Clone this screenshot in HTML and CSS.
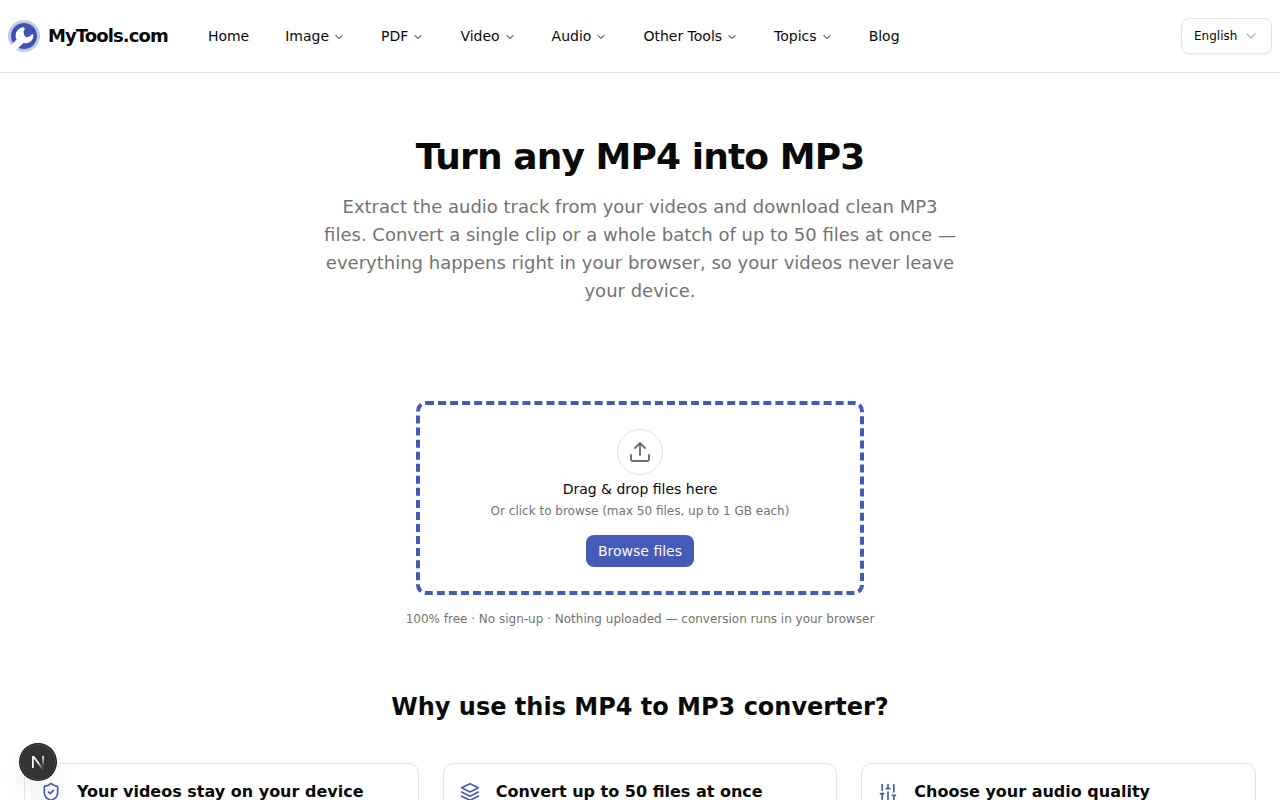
FILE: index.html
```html
<!DOCTYPE html>
<html lang="en">

<head>
    <meta charset="utf-8" />
    <title>MP4 to MP3 - MyTools.com</title>
    <meta name="viewport" content="width=device-width, initial-scale=1">
    <link rel="stylesheet" href="styles.css">
</head>

<body>
    <svg class="sprite" aria-hidden="true">
        <symbol id="chevron" viewBox="0 0 24 24">
            <path d="m6 9 6 6 6-6" />
        </symbol>
    </svg>

    <header class="header">
        <a class="brand" href="#">
            <svg class="logo" viewBox="0 0 32 32" aria-hidden="true">
                <circle cx="16" cy="16" r="16" fill="#c5cae0" />
                <circle cx="16" cy="16" r="13" fill="#3f51b5" />
                <path fill="#fff" d="M0 28 8.500 19.500C7 16 7.500 12.500 9.500 10.500 11 8.500 13 7 16 7.200L16.800 9 15.500 11.500 16.500 16 18.500 17.200 22 16.300 24 14 25.300 15C25.500 18.500 24 21 21.500 22.300 19.500 23.500 17.500 23.500 15.500 23L6 32H0Z" />
            </svg>
            <span class="brand-name">MyTools.com</span>
        </a>
        <nav class="nav">
            <a href="#">Home</a>
            <button type="button">Image <svg class="chevron"><use href="#chevron" /></svg></button>
            <button type="button">PDF <svg class="chevron"><use href="#chevron" /></svg></button>
            <button type="button">Video <svg class="chevron"><use href="#chevron" /></svg></button>
            <button type="button">Audio <svg class="chevron"><use href="#chevron" /></svg></button>
            <button type="button">Other Tools <svg class="chevron"><use href="#chevron" /></svg></button>
            <button type="button">Topics <svg class="chevron"><use href="#chevron" /></svg></button>
            <a href="#">Blog</a>
        </nav>
        <div class="language">
            <select aria-label="Language">
                <option>English</option>
            </select>
            <svg class="chevron"><use href="#chevron" /></svg>
        </div>
    </header>

    <main>
        <section class="hero">
            <h1>Turn any MP4 into MP3</h1>
            <p>Extract the audio track from your videos and download clean MP3 files. Convert a single clip or a whole batch of up to 50 files at once — everything happens right in your browser, so your videos never leave your device.</p>
        </section>

        <section class="converter">
            <div class="dropzone">
                <div class="upload-icon">
                    <svg class="icon" viewBox="0 0 24 24" aria-hidden="true">
                        <path d="M12 3v12M17 8l-5-5-5 5M21 15v4a2 2 0 0 1-2 2H5a2 2 0 0 1-2-2v-4" />
                    </svg>
                </div>
                <p class="drop-title">Drag &amp; drop files here</p>
                <p class="drop-hint">Or click to browse (max 50 files, up to 1 GB each)</p>
                <button type="button" class="btn-primary">Browse files</button>
            </div>
            <p class="note">100% free · No sign-up · Nothing uploaded — conversion runs in your browser</p>
        </section>

        <section class="features">
            <h2>Why use this MP4 to MP3 converter?</h2>
            <div class="cards">
                <article class="card">
                    <svg class="icon" viewBox="0 0 24 24" aria-hidden="true">
                        <path d="M20 13c0 5-3.500 7.500-7.660 8.950a1 1 0 0 1-.67-.01C7.500 20.500 4 18 4 13V6a1 1 0 0 1 1-1c2 0 4.500-1.200 6.240-2.720a1.170 1.170 0 0 1 1.520 0C14.510 3.810 17 5 19 5a1 1 0 0 1 1 1z" />
                        <path d="m9 12 2 2 4-4" />
                    </svg>
                    <h3>Your videos stay on your device</h3>
                </article>
                <article class="card">
                    <svg class="icon" viewBox="0 0 24 24" aria-hidden="true">
                        <path d="M12 2 2 7l10 5 10-5z" />
                        <path d="m2 12 10 5 10-5" />
                        <path d="m2 17 10 5 10-5" />
                    </svg>
                    <h3>Convert up to 50 files at once</h3>
                </article>
                <article class="card">
                    <svg class="icon" viewBox="0 0 24 24" aria-hidden="true">
                        <path d="M5 21v-7M5 10V3M12 21v-9M12 8V3M19 21v-5M19 12V3M3 14h4M10 8h4M17 16h4" />
                    </svg>
                    <h3>Choose your audio quality</h3>
                </article>
            </div>
        </section>
    </main>

    <button type="button" class="dev-badge" aria-label="Open developer tools">
        <svg viewBox="0 0 40 40" aria-hidden="true">
            <defs>
                <linearGradient id="fade-diagonal" x1="20" y1="19" x2="27" y2="29" gradientUnits="userSpaceOnUse">
                    <stop stop-color="#fff" />
                    <stop offset="1" stop-color="#fff" stop-opacity="0" />
                </linearGradient>
                <linearGradient id="fade-stem" x1="26" y1="13" x2="26" y2="26" gradientUnits="userSpaceOnUse">
                    <stop stop-color="#fff" />
                    <stop offset="1" stop-color="#fff" stop-opacity="0" />
                </linearGradient>
            </defs>
            <path d="M14 27V14h1l6 8" stroke="#fff" />
            <path d="m21 22 5 7" stroke="url(#fade-diagonal)" />
            <path d="M25 13h2v13h-2z" fill="url(#fade-stem)" />
        </svg>
    </button>
</body>

</html>
```
FILE: styles.css
```css
* {
    box-sizing: border-box;
}

body {
    margin: 0;
    font-family: "DejaVu Sans", sans-serif;
    font-size: 14px;
    line-height: 20px;
    color: #0a0a0a;
    background-color: #fff;
}

h1,
h2,
h3,
p {
    margin: 0;
}

a {
    color: inherit;
    text-decoration: none;
}

button,
select {
    font: inherit;
    color: inherit;
    cursor: pointer;
}

.sprite {
    display: none;
}

.icon,
.chevron {
    flex-shrink: 0;
    fill: none;
    stroke: currentColor;
    stroke-width: 2;
    stroke-linecap: round;
    stroke-linejoin: round;
}

.header {
    display: flex;
    align-items: center;
    gap: 40px;
    padding: 18px 8px;
    border-bottom: 1px solid #e5e5e5;
}

.brand {
    display: flex;
    align-items: center;
    gap: 8px;
}

.logo {
    width: 32px;
    height: 32px;
}

.brand-name {
    font-size: 18px;
    font-weight: bold;
    line-height: 28px;
    letter-spacing: -0.05em;
}

.nav {
    display: flex;
    align-items: center;
    gap: 36px;
}

.nav button {
    display: flex;
    align-items: center;
    gap: 4px;
    padding: 0;
    border: 0;
    background: none;
}

.nav .chevron {
    width: 12px;
    height: 12px;
    margin-top: 2px;
}

.language {
    display: grid;
    align-items: center;
    margin-left: auto;
}

.language select,
.language .chevron {
    grid-area: 1 / 1;
}

.language select {
    height: 36px;
    padding: 0 33px 0 12px;
    border: 1px solid #e5e5e5;
    border-radius: 8px;
    background-color: #fff;
    box-shadow: 0 1px 2px rgba(0, 0, 0, 0.05);
    font-size: 12px;
    appearance: none;
}

.language .chevron {
    justify-self: end;
    width: 16px;
    height: 16px;
    margin-right: 13px;
    color: #b5b5b5;
    pointer-events: none;
}

.hero {
    max-width: 640px;
    margin: 0 auto;
    padding: 64px 0 96px;
    text-align: center;
}

.hero h1 {
    font-size: 36px;
    line-height: 40px;
    letter-spacing: -0.025em;
}

.hero p {
    margin-top: 16px;
    font-size: 18px;
    line-height: 28px;
    color: #737373;
}

.converter {
    display: flex;
    flex-direction: column;
    align-items: center;
    padding: 0 16px;
}

.dropzone {
    display: flex;
    flex-direction: column;
    align-items: center;
    width: 100%;
    max-width: 448px;
    padding: 24px;
    border: 4px dashed #465ab8;
    border-radius: 10px;
}

.upload-icon {
    padding: 10px;
    border: 1px solid #e5e5e5;
    border-radius: 50%;
    color: #737373;
}

.upload-icon .icon {
    display: block;
    width: 24px;
    height: 24px;
}

.drop-title {
    margin-top: 4px;
}

.drop-hint {
    margin-top: 4px;
    font-size: 12px;
    line-height: 16px;
    color: #737373;
}

.btn-primary {
    height: 32px;
    margin-top: 16px;
    padding: 0 12px;
    border: 0;
    border-radius: 8px;
    background-color: #465ab8;
    color: #fafafa;
}

.note {
    margin-top: 16px;
    font-size: 12px;
    line-height: 16px;
    color: #737373;
    text-align: center;
}

.features {
    padding: 64px 24px;
}

.features h2 {
    font-size: 24px;
    line-height: 32px;
    text-align: center;
}

.cards {
    display: grid;
    grid-template-columns: repeat(3, 1fr);
    gap: 24px;
    margin-top: 40px;
}

.card {
    display: flex;
    align-items: center;
    gap: 16px;
    padding: 16px;
    border: 1px solid #e5e5e5;
    border-radius: 10px;
}

.card h3 {
    font-size: 16px;
    line-height: 24px;
}

.card .icon {
    width: 20px;
    height: 20px;
    color: #465ab8;
}

.dev-badge {
    position: fixed;
    left: 20px;
    bottom: 20px;
    width: 36px;
    height: 36px;
    padding: 0;
    border: 1px solid #4a4a4a;
    border-radius: 50%;
    background-color: #333;
    box-shadow: 0 0 0 1px #171717, 0 16px 32px -8px rgba(0, 0, 0, 0.24);
}

.dev-badge svg {
    display: block;
    width: 100%;
    fill: none;
    stroke-width: 2;
}
```
